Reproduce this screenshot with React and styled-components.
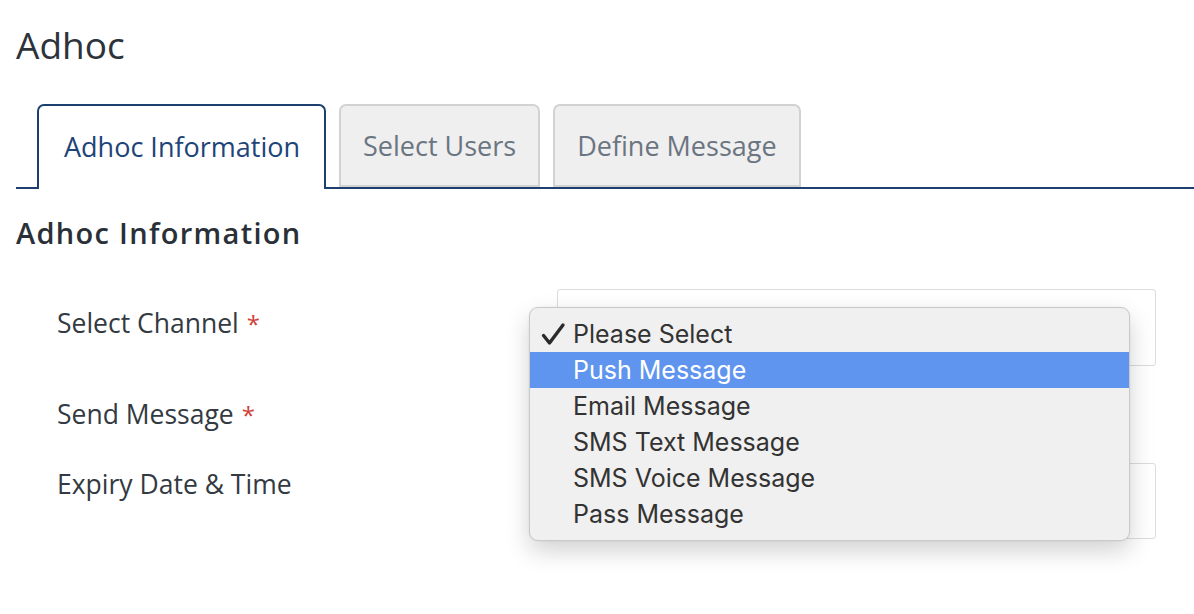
import React from "react";
import styled, { createGlobalStyle } from "styled-components";

const GlobalStyle = createGlobalStyle`
  html, body {
    margin: 0;
    padding: 0;
    background: #ffffff;
  }
  body {
    font-family: "Open Sans", "Noto Sans", sans-serif;
    color: #2f363e;
  }
`;

const Page = styled.div`
  position: relative;
  width: 1194px;
  height: 614px;
  padding: 0 0 0 16px;
  box-sizing: border-box;
  overflow: hidden;
`;

const Title = styled.h1`
  margin: 0;
  padding-top: 20px;
  font-size: 37px;
  font-weight: 400;
  line-height: 50px;
  color: #2d333a;
`;

const TabBar = styled.div`
  display: flex;
  gap: 13px;
  margin-top: 34px;
  padding-left: 21px;
  border-bottom: 2px solid #1b3f6e;
  height: 83px;
`;

const Tab = styled.div`
  display: flex;
  align-items: center;
  padding: ${(p) => (p.$active ? "0 24px 2px 25px" : "0 22px")};
  margin-bottom: ${(p) => (p.$active ? "-2px" : "0")};
  height: ${(p) => (p.$active ? "85px" : "83px")};
  box-sizing: border-box;
  border: 2px solid ${(p) => (p.$active ? "#1b3f6e" : "#d2d2d2")};
  border-bottom: ${(p) => (p.$active ? "none" : "2px solid #d2d2d2")};
  border-radius: 7px 7px 0 0;
  background: ${(p) => (p.$active ? "#ffffff" : "#efefef")};
  color: ${(p) => (p.$active ? "#1e4478" : "#6b7581")};
  font-size: 27px;
  white-space: nowrap;
`;

const SectionTitle = styled.h2`
  margin: 24px 0 0;
  font-size: 29px;
  font-weight: 600;
  letter-spacing: 1.3px;
  line-height: 40px;
  color: #2a3038;
`;

const Form = styled.div`
  display: grid;
  grid-template-columns: 500px 599px;
  row-gap: 30px;
  margin-top: 36px;
  padding-left: 41px;
`;

const Label = styled.div`
  font-size: 26.5px;
  line-height: 36px;
  padding-top: ${(p) => p.$top}px;
  color: #333a42;
  white-space: nowrap;
`;

const Required = styled.span`
  color: #d0413a;
  margin-left: 8px;
  font-size: 24px;
`;

const Field = styled.div`
  height: ${(p) => p.$h}px;
  box-sizing: border-box;
  border: ${(p) => (p.$empty ? "none" : "1px solid #dcdcdc")};
  border-radius: 3px;
  background: #ffffff;
`;

const Menu = styled.ul`
  position: absolute;
  left: 529px;
  top: 307px;
  width: 601px;
  margin: 0;
  padding: 8px 0;
  list-style: none;
  box-sizing: border-box;
  background: #f0f0f0;
  border: 1px solid #c9c9c9;
  border-radius: 9px;
  box-shadow: 0 10px 24px rgba(0, 0, 0, 0.18), 0 0 2px rgba(0, 0, 0, 0.08);
  font-family: Inter, Roboto, "Liberation Sans", sans-serif;
`;

const Option = styled.li`
  position: relative;
  height: 36px;
  line-height: 36px;
  padding-left: 43px;
  font-size: 25px;
  color: ${(p) => (p.$hl ? "#ffffff" : "#333333")};
  background: ${(p) => (p.$hl ? "#5f95ee" : "transparent")};
`;

const Check = styled.svg`
  position: absolute;
  left: 11px;
  top: 6px;
  width: 25px;
  height: 25px;
`;

const options = [
  "Please Select",
  "Push Message",
  "Email Message",
  "SMS Text Message",
  "SMS Voice Message",
  "Pass Message",
];

export default function App() {
  return (
    <>
      <GlobalStyle />
      <Page>
        <Title>Adhoc</Title>
        <TabBar>
          <Tab $active>Adhoc Information</Tab>
          <Tab>Select Users</Tab>
          <Tab>Define Message</Tab>
        </TabBar>
        <SectionTitle>Adhoc Information</SectionTitle>
        <Form>
          <Label $top={16}>
            Select Channel<Required>*</Required>
          </Label>
          <Field $h={77} />
          <Label $top={0}>
            Send Message<Required>*</Required>
          </Label>
          <Field $h={35} $empty />
          <Label $top={3}>Expiry Date &amp; Time</Label>
          <Field $h={76} />
        </Form>
        <Menu>
          {options.map((o, i) => (
            <Option key={o} $hl={i === 1}>
              {i === 0 && (
                <Check viewBox="0 0 25 25">
                  <path
                    d="M2.5 13.5 L8.5 21 L22 3"
                    fill="none"
                    stroke="#2b2b2b"
                    strokeWidth="3.4"
                    strokeLinecap="round"
                    strokeLinejoin="round"
                  />
                </Check>
              )}
              {o}
            </Option>
          ))}
        </Menu>
      </Page>
    </>
  );
}
